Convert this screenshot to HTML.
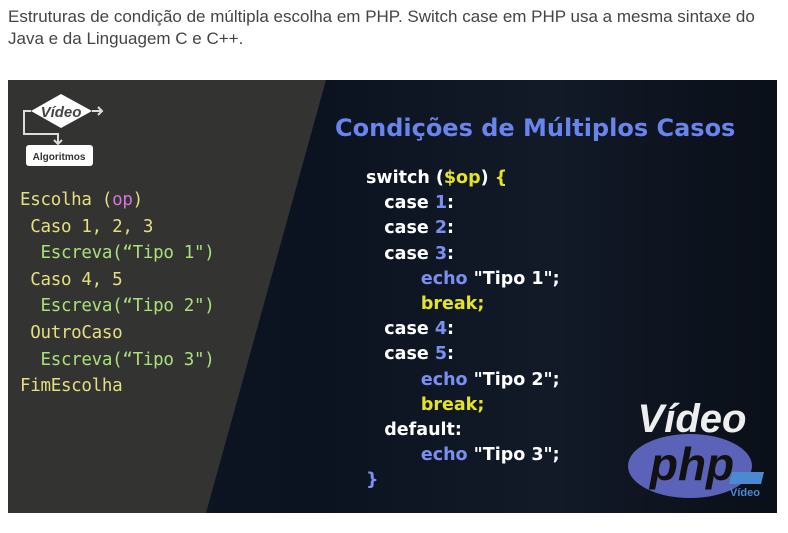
<!DOCTYPE html>
<html><head><meta charset="utf-8"><style>
body{margin:0;width:788px;height:533px;background:#fff;position:relative;overflow:hidden;font-family:"Liberation Sans",sans-serif}
.cap{position:absolute;left:8px;top:6px;font-size:17px;line-height:22px;color:#444;width:772px}
.img{position:absolute;left:8px;top:80px;width:769px;height:433px;background:linear-gradient(90deg,#101826,#0b1220 40%,#121a28 70%,#0a0f18);overflow:hidden}
.chalk{position:absolute;left:0;top:0;width:769px;height:433px;background:#333331;clip-path:polygon(0 0,318px 0,198px 433px,0 433px)}
.t{position:absolute;white-space:pre;font-weight:bold}
.l{font-family:"DejaVu Sans Mono","Liberation Mono",monospace;font-size:17.5px;color:#e6df80;font-weight:normal;letter-spacing:-0.3px}
.g{color:#a9e07c}
.r{font-family:"DejaVu Sans","Liberation Sans",sans-serif;font-size:17.5px;color:#fff}
.b{color:#7b8ff0}.y{color:#e4e326}
</style></head><body>
<div class="cap">Estruturas de condição de múltipla escolha em PHP. Switch case em PHP usa a mesma sintaxe do Java e da Linguagem C e C++.</div>
<div class="img">
<div class="chalk"></div>
<svg style="position:absolute;left:10px;top:6px" width="90" height="84">
<polygon points="13,25 43,8 74,25 43,42" fill="#fff"/>
<text x="43" y="31" font-size="15" font-weight="bold" font-style="italic" text-anchor="middle" fill="#444" font-family="Liberation Sans">Vídeo</text>
<path d="M74,25 H84 M80,21 L84,25 L80,29 M13,25 H6 V48 H40 V58 M36,54 L40,58 L44,54" stroke="#ddd" stroke-width="2" fill="none"/>
<rect x="8" y="59" width="67" height="21" rx="3" fill="#fff"/>
<text x="41" y="74" font-size="10" font-weight="bold" text-anchor="middle" fill="#333">Algoritmos</text>
</svg>
<div class="t l" style="left:12px;top:107px;line-height:26.6px">Escolha (<span style="color:#d474d8">op</span>)
 Caso 1, 2, 3
  <span class="g">Escreva(“Tipo 1")</span>
 Caso 4, 5
  <span class="g">Escreva(“Tipo 2")</span>
 OutroCaso
  <span class="g">Escreva(“Tipo 3")</span>
FimEscolha</div>
<div class="t" style="left:327px;top:34px;font-size:24px;color:#6a84ee;font-family:'DejaVu Sans',sans-serif">Condições de Múltiplos Casos</div>
<div class="t r" style="left:358px;top:86px;line-height:25.2px">switch (<span class="y">$op</span>) <span class="y">{</span>
   case <span class="b">1</span>:
   case <span class="b">2</span>:
   case <span class="b">3</span>:
         <span class="b">echo</span> "Tipo 1";
         <span class="y">break;</span>
   case <span class="b">4</span>:
   case <span class="b">5</span>:
         <span class="b">echo</span> "Tipo 2";
         <span class="y">break;</span>
   default:
         <span class="b">echo</span> "Tipo 3";
<span class="b">}</span></div>
<svg style="position:absolute;left:618px;top:312px" width="150" height="120">
<ellipse cx="64" cy="74" rx="62" ry="32" fill="#5a63b8"/>
<text x="66" y="40" font-size="40" font-weight="bold" font-style="italic" text-anchor="middle" fill="#eee" font-family="Liberation Sans">Vídeo</text>
<text x="66" y="88" font-size="46" font-weight="bold" font-style="italic" text-anchor="middle" fill="#111" font-family="Liberation Sans">php</text>
<polygon points="106,80 138,80 135,92 103,92" fill="#4a8ad0"/>
<text x="119" y="104" font-size="11" font-weight="bold" text-anchor="middle" fill="#4a8ad0">Vídeo</text>
</svg>
</div>
</body></html>
